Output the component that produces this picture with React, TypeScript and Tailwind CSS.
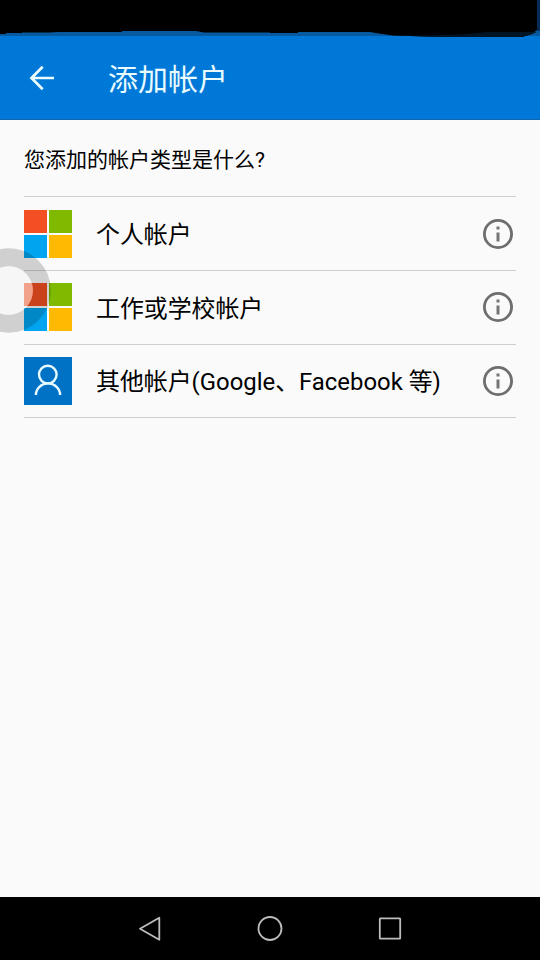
import { Fragment } from 'react'

const accounts = [
  { id: 'personal', label: '个人帐户', icon: 'microsoft' },
  { id: 'work', label: '工作或学校帐户', icon: 'microsoft' },
  { id: 'other', label: '其他帐户(Google、Facebook 等)', icon: 'person' },
]

function MicrosoftLogo() {
  return (
    <div className="grid size-12 shrink-0 grid-cols-2 gap-0.5">
      <span className="bg-[#f25022]" />
      <span className="bg-[#7fba00]" />
      <span className="bg-[#00a4ef]" />
      <span className="bg-[#ffb900]" />
    </div>
  )
}

function PersonTile() {
  return (
    <svg className="size-12 shrink-0 bg-[#0072c6]" viewBox="0 0 48 48" fill="none" stroke="#e8fbff" strokeWidth="2.4">
      <circle cx="23.800" cy="17.600" r="8.800" />
      <path d="M11.900 38A12.100 11.600 0 0 1 36.100 38" />
    </svg>
  )
}

function InfoIcon() {
  return (
    <svg className="size-9 shrink-0" viewBox="0 0 36 36" fill="none">
      <circle cx="18" cy="18" r="13.6" stroke="#6e6e6e" strokeWidth="2.8" />
      <path d="M16.500 10.500h3v3h-3zM16.500 16.500h3v9h-3z" fill="#757575" />
    </svg>
  )
}

// Floating assistive button, half hidden at the left edge
function TouchButton() {
  return (
    <svg className="pointer-events-none absolute top-[247px] left-0" width="54" height="88" viewBox="0 0 54 88">
      <circle cx="8.700" cy="43.500" r="33.200" fill="none" stroke="#000" strokeOpacity="0.17" strokeWidth="18" />
      <circle cx="8.700" cy="43.500" r="24.300" fill="#f2f2f2" fillOpacity="0.5" />
    </svg>
  )
}

function StatusBar() {
  return (
    <svg className="block h-[38px] w-full shrink-0" viewBox="0 0 540 38">
      <rect width="540" height="36" fill="#075a9f" />
      <rect y="36" width="540" height="2" fill="#0078d7" />
      <path
        d="M0 0H537V30L532 34L523 36.700H434L393 35.500L379 33.500L370 32H298L298 33H270L270 32.500H204L196 31H122V32H58L50 32.500H22V33H7L5 34H0Z"
        fill="#000"
      />
      <path d="M537 0h3v31h-3z" fill="#042d55" />
      <path d="M393 35.500Q455 36 488 32H537L532 34L523 36.700H434Z" fill="#011524" />
    </svg>
  )
}

export default function App() {
  return (
    <div className="relative flex h-[960px] w-[540px] flex-col overflow-hidden bg-[#fafafa] font-['Roboto','Noto_Sans_CJK_SC',sans-serif] text-black">
      <StatusBar />

      {/* Toolbar */}
      <header className="flex h-[82px] shrink-0 items-center border-b border-[#1268b0] bg-[#0078d7] pb-0.5 pl-6 text-[#e9fcff]">
        <svg className="size-9 shrink-0" viewBox="0 0 36 36" fill="none" stroke="currentColor" strokeWidth="2.700">
          <path d="M30 18H8M18.700 6.800L7.500 18L18.700 29.200" />
        </svg>
        <h1 className="ml-12 pt-1 text-[30px] leading-10">添加帐户</h1>
      </header>

      <main className="flex-1 px-6">
        <p className="flex h-[76.400px] items-center pt-1 text-[21px] leading-none">您添加的帐户类型是什么?</p>
        <hr className="h-px border-0 bg-[#cecece]" />
        {accounts.map((account) => (
          <Fragment key={account.id}>
            <div className="flex h-[72.600px] items-center">
              {account.icon === 'microsoft' ? <MicrosoftLogo /> : <PersonTile />}
              <span className="ml-6 flex-1 pt-[3px] text-[23.900px] leading-8 whitespace-nowrap">{account.label}</span>
              <InfoIcon />
            </div>
            <hr className="h-px border-0 bg-[#cecece]" />
          </Fragment>
        ))}
      </main>

      {/* System navigation */}
      <nav className="flex h-[63px] shrink-0 items-center justify-center gap-[84px] bg-black">
        <svg className="size-9" viewBox="0 0 36 36" fill="none" stroke="#bdbdbd" strokeWidth="1.800" strokeLinejoin="round">
          <path d="M27.300 6.700V28.700L8 17.700Z" />
        </svg>
        <svg className="size-9" viewBox="0 0 36 36" fill="none" stroke="#bdbdbd" strokeWidth="1.800">
          <circle cx="18" cy="17.500" r="11.500" />
        </svg>
        <svg className="size-9" viewBox="0 0 36 36" fill="none" stroke="#bdbdbd" strokeWidth="1.800">
          <rect x="7.800" y="7.300" width="20.400" height="20.400" rx="0.600" />
        </svg>
      </nav>

      <TouchButton />
    </div>
  )
}
